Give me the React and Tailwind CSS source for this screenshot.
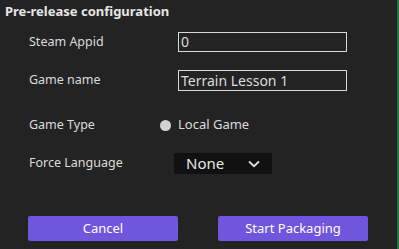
import React from "react";

function Row({ label, children, className = "" }) {
  return (
    <div className={"flex items-center " + className}>
      <div className="w-[178px] shrink-0 pl-[29px] text-[12.5px] text-[#dcdcdc] whitespace-nowrap">
        {label}
      </div>
      {children}
    </div>
  );
}

export default function App() {
  return (
    <div
      className="w-[399px] h-[249px] bg-[#232323] border-r-2 border-[#1c7a3a] overflow-hidden"
      style={{ fontFamily: '"Noto Sans", "Open Sans", sans-serif' }}
    >
      <div className="h-[22px] leading-[22px] pl-[5px] text-[13px] font-bold text-[#e6e6e6]">
        Pre-release configuration
      </div>

      <Row label="Steam Appid" className="mt-[10px] h-[20px]">
        <div className="w-[169px] h-[20px] border border-[#d8d8d8] px-[2px] text-[14px] leading-[18px] text-[#dcdcdc]">
          0
        </div>
      </Row>

      <Row label="Game name" className="mt-[18px] h-[21px]">
        <div className="w-[169px] h-[21px] border border-[#d8d8d8] px-[2px] text-[14px] leading-[19px] text-[#dcdcdc]">
          Terrain Lesson 1
        </div>
      </Row>

      <Row label="Game Type" className="mt-[24px] h-[20px]">
        <div className="flex items-center -ml-[18px]">
          <span className="w-[11px] h-[11px] rounded-full bg-[#d2d2d2]" />
          <span className="ml-[7px] text-[13px] text-[#dcdcdc]">Local Game</span>
        </div>
      </Row>

      <Row label="Force Language" className="mt-[18px] h-[21px]">
        <div className="-ml-[4px] w-[98px] h-[21px] bg-[#111111] flex items-center pl-[12px] pr-[12px] justify-between rounded-[1px]">
          <span className="text-[15px] text-[#e8e8e8]">None</span>
          <svg width="12" height="8" viewBox="0 0 12 8" fill="none">
            <path d="M1 1.5L6 6.2L11 1.5" stroke="#e0e0e0" strokeWidth="1.8" />
          </svg>
        </div>
      </Row>

      <div className="mt-[42px] flex pl-[28px] gap-[40px]">
        <button className="w-[150px] h-[25px] bg-[#7056dd] rounded-[2px] text-[13px] text-white">
          Cancel
        </button>
        <button className="w-[150px] h-[25px] bg-[#7056dd] rounded-[2px] text-[13px] text-white">
          Start Packaging
        </button>
      </div>
    </div>
  );
}
